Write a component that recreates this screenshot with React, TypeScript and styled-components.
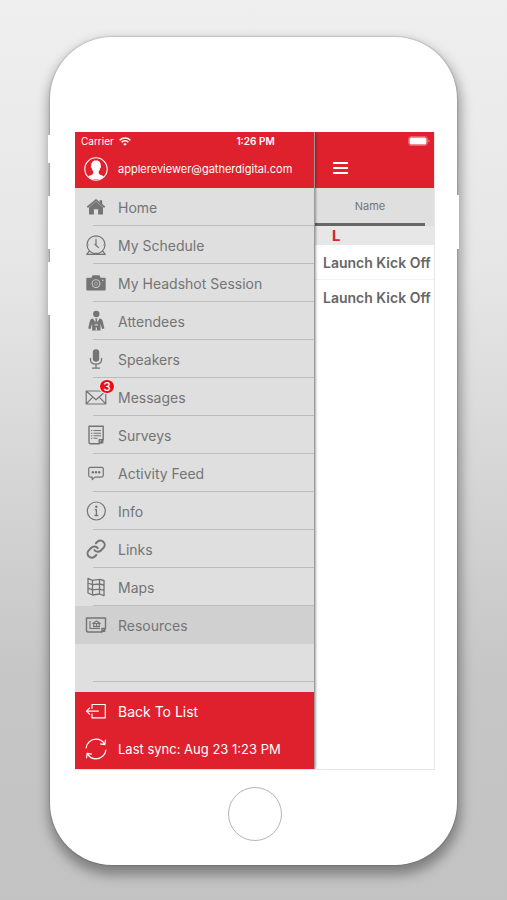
import React from "react";
import styled, { createGlobalStyle, css } from "styled-components";

const red = "#df202d";
const ink = "#747474";

const GlobalStyle = createGlobalStyle`
  *, *::before, *::after { box-sizing: border-box; }
  body { margin: 0; background: #c4c4c4; }
  button { font: inherit; color: inherit; background: none; border: 0; padding: 0; cursor: pointer; }
`;

const Page = styled.main`
  min-height: 100vh;
  padding: 37px 50px 35px;
  display: flex;
  justify-content: center;
  align-items: flex-start;
  background: linear-gradient(#efefef 0%, #e6e6e6 30%, #c6c6c6 75%, #c3c3c3 100%);
  font-family: Inter, Roboto, "Liberation Sans", sans-serif;
  color: ${ink};
`;

const Phone = styled.div`
  position: relative;
  flex: 1;
  max-width: 480px;
  padding: 95px 22px 24px 25px;
  border-radius: 62px;
  background: #fff;
  box-shadow: 0 0 1px 1px rgba(0, 0, 0, 0.12), 1px 7px 12px 3px rgba(0, 0, 0, 0.34);
`;

const SideKey = styled.span<{ $side: "left" | "right"; $top: number; $length: number }>`
  position: absolute;
  ${(p) => p.$side}: -2px;
  top: ${(p) => p.$top}px;
  width: 4px;
  height: ${(p) => p.$length}px;
  background: #fff;
`;

const Screen = styled.div`
  position: relative;
  display: flex;
  border: solid #e6e6e6;
  border-width: 0 1px 1px 0;
  overflow: hidden;
`;

const StatusBar = styled.div`
  position: absolute;
  inset: 0 0 auto 0;
  z-index: 2;
  display: grid;
  grid-template-columns: 1fr auto 1fr;
  align-items: center;
  height: 18px;
  padding: 0 4px 0 6px;
  font-size: 10px;
  color: #fff;
`;

const StatusGroup = styled.div`
  display: flex;
  align-items: center;
  gap: 5px;
`;

const Clock = styled.time`
  font-weight: 600;
`;

const BatterySlot = styled.div`
  display: flex;
  justify-content: flex-end;
`;

const Drawer = styled.aside`
  position: relative;
  z-index: 1;
  flex: 0 0 240px;
  display: flex;
  flex-direction: column;
  background: #dfdfdf;
  border-right: 1px solid rgba(0, 0, 0, 0.3);
  box-shadow: 0 0 3px rgba(0, 0, 0, 0.6);
`;

const Account = styled.header`
  display: flex;
  align-items: center;
  gap: 10px;
  height: 56px;
  padding: 17px 0 0 9px;
  background: ${red};
  color: #fff;
  font-size: 11px;
`;

const Menu = styled.ul`
  margin: 0;
  padding: 0 0 10px;
  list-style: none;
`;

const line = css`
  &::after {
    content: "";
    position: absolute;
    inset: auto 0 0 18px;
    height: 1px;
    background: #bdbdbd;
  }
`;

const MenuItem = styled.li<{ $active?: boolean }>`
  position: relative;
  height: 38px;
  ${(p) => (p.$active ? "background: #d0d0d0;" : line)}
`;

const RowButton = styled.button<{ $size: number }>`
  display: flex;
  align-items: center;
  gap: 11px;
  width: 100%;
  height: 38px;
  padding-left: 10px;
  text-align: left;
  font-size: ${(p) => p.$size}px;
`;

const IconBox = styled.span`
  position: relative;
  flex: none;
  display: flex;
  width: 22px;
  height: 22px;
`;

const Badge = styled.span`
  position: absolute;
  top: -7px;
  right: -8px;
  display: flex;
  align-items: center;
  justify-content: center;
  width: 16px;
  height: 15px;
  border: 1px solid #fff;
  border-radius: 8px;
  background: #f00a12;
  color: #fff;
  font-size: 12px;
  font-weight: 500;
  line-height: 13px;
`;

const DrawerFooter = styled.footer`
  height: 77px;
  background: ${red};
  color: #fff;
`;

const Detail = styled.section`
  flex: 1;
  min-width: 0;
  background: #fff;
`;

const DetailBar = styled.header`
  display: flex;
  align-items: center;
  height: 56px;
  padding: 16px 0 0 18px;
  background: ${red};
  color: #fff;
`;

const MenuToggle = styled.button`
  display: flex;
`;

const Tabs = styled.div`
  height: 38px;
  padding-right: 9px;
  background: #dfdfdf;
`;

const Tab = styled.button`
  width: 100%;
  height: 38px;
  border-bottom: 3px solid #666;
  font-size: 11px;
`;

const Letter = styled.h2`
  margin: 0;
  height: 19px;
  padding-left: 17px;
  background: #e7e7e7;
  color: ${red};
  font: 700 15px/20px Roboto, sans-serif;
`;

const Entries = styled.ul`
  margin: 0;
  padding: 0;
  list-style: none;
`;

const Entry = styled.li`
  height: 35px;
  padding-left: 8px;
  line-height: 35px;
  font-size: 14px;
  font-weight: 600;
  white-space: nowrap;
  overflow: hidden;
  color: #666;
  &:not(:last-child) {
    border-bottom: 1px solid #f3f3f3;
  }
`;

const HomeButton = styled.button`
  display: block;
  width: 54px;
  height: 54px;
  margin: 17px auto 0;
  border: 1px solid #b4b4b4;
  border-radius: 50%;
`;

const Svg = ({ children }: { children: React.ReactNode }) => (
  <svg width="22" height="22" viewBox="0 0 22 22" fill="none" stroke="currentColor" strokeWidth="1.2" strokeLinejoin="round" aria-hidden="true">
    {children}
  </svg>
);

const solid = { fill: "currentColor", stroke: "none" };

const icons = {
  home: (
    <Svg>
      <g {...solid}>
        <path d="M11 3 1.800 10.600l1.100 1.300L11 5.300l8.100 6.600 1.100-1.300-3-2.500V4.200h-2.600V6z" />
        <path d="M11 5.400 4 11.400v7.100h4.900v-5.200h4.200v5.200H18v-7.100z" />
      </g>
    </Svg>
  ),
  schedule: (
    <Svg>
      <circle cx="11" cy="10.800" r="9" />
      <path d="M11 5v6.300l2.800 2.600M11 11.300l-1.500-1M4.500 17l-2.800 3.300h18.600L17.500 17" />
      <path d="M11 2.500v1M11 18v1M2.800 11h1M18.200 11h1" strokeWidth=".8" />
    </Svg>
  ),
  camera: (
    <Svg>
      <path {...solid} d="M2.300 5.800h4.200l1-2.500h7l1 2.500h4.200q1 0 1 1v10.600q0 1-1 1H2.300q-1 0-1-1V6.800q0-1 1-1z" />
      <circle cx="11" cy="11.600" r="3.900" stroke="#c6c6c6" strokeWidth="1.100" />
      <circle cx="11" cy="11.600" r="1.500" stroke="#b4b4b4" strokeWidth=".8" />
      <circle cx="17.800" cy="8.200" r=".7" fill="#dfdfdf" stroke="none" />
    </Svg>
  ),
  attendees: (
    <Svg>
      <circle cx="11.300" cy="4" r="3.200" {...solid} />
      <path {...solid} d="M8 8.500 11.300 14l3.300-5.500c2.200.2 2.800 1.200 3.300 3.300l1.500 6.700-2.300.5-1.600-5.500v6.900H7.100v-6.900L5.500 19l-2.300-.5 1.500-6.700C5.200 9.700 5.800 8.700 8 8.500z" />
      <path {...solid} d="M10 8.500h2.600l-.7 1.300.6 2.700-1.200 1.300-1.200-1.300.6-2.700z" />
      <path d="M9.500 15h3.600M11.300 17.500v3" stroke="#dfdfdf" strokeWidth="1.200" />
    </Svg>
  ),
  speakers: (
    <Svg>
      <rect x="7.800" y="1.200" width="6.400" height="12.600" rx="3.200" {...solid} />
      <path d="M5.500 10v1.800q0 4.400 5.500 4.400t5.500-4.400V10M11 16v3.800M7 20.200h8" strokeWidth="1.300" />
    </Svg>
  ),
  messages: (
    <Svg>
      <path d="M1.200 5h19.600v13H1.200zM1.500 5.300 11 13.800l9.500-8.500M1.500 17.700l6.200-6.600M20.500 17.700l-6.200-6.600" />
    </Svg>
  ),
  surveys: (
    <Svg>
      <path d="M4 2.300h14.200v13.500l-4 4H5.500q-1.500 0-1.500-1.500zM14.200 19.500v-3.700h4" strokeWidth="1.400" />
      <path d="M18.400 15.800v3.700h-3.900z" {...solid} />
      <path d="M8.500 6.500H16M8.500 9.200H16M8.500 11.800H16M8.500 14.300h4M6 6.500h1.300M6 9.200h1.300M6 11.800h1.300M6 14.300h1.300" strokeWidth="1.100" />
    </Svg>
  ),
  feed: (
    <Svg>
      <path d="M5.500 5.300h11q1.800 0 1.800 1.800v6.200q0 1.800-1.800 1.800H9.800l-2.600 2.500v-2.500H5.500q-1.800 0-1.800-1.800V7.100q0-1.800 1.800-1.800z" />
      <g {...solid}>
        <circle cx="7.800" cy="10.200" r="1.200" />
        <circle cx="11" cy="10.200" r="1.200" />
        <circle cx="14.200" cy="10.200" r="1.200" />
      </g>
    </Svg>
  ),
  info: (
    <Svg>
      <circle cx="11.300" cy="11" r="9" />
      <circle cx="11.300" cy="6.800" r="1.200" {...solid} />
      <path d="M9.700 9.600h1.700v5.900M9.500 15.500h3.800" strokeWidth="1.300" />
    </Svg>
  ),
  links: (
    <Svg>
      <g transform="translate(.8 .8) scale(.86)" strokeWidth="2.300" strokeLinecap="round">
        <path d="M10 13a5 5 0 0 0 7.540.540l3-3a5 5 0 0 0-7.070-7.070l-1.720 1.710" />
        <path d="M14 11a5 5 0 0 0-7.540-.540l-3 3a5 5 0 0 0 7.070 7.070l1.710-1.710" />
      </g>
    </Svg>
  ),
  maps: (
    <Svg>
      <path d="M3 2.300 7.500 4.300 14.500 3.300 19 4.500v15.200L14.500 18l-7 1L3 17zM7.500 4.300V19M14.500 3.300V18M3 7l4.500 1.600 7-.6L19 9M3 12.200l4.500 1.600 7-.6 4.500 1.100" strokeWidth="1.300" />
    </Svg>
  ),
  resources: (
    <Svg>
      <path d="M1.500 4h19v10.500L17 18H3q-1.500 0-1.500-1.500zM17 18v-3.500h3.500" strokeWidth="1.400" />
      <path d="M20.300 14.500v3.400h-3.500z" {...solid} />
      <path d="M5 7v7.500h10M7.800 9.500 11.500 7l3.700 2.500zM8.800 10v3.300M11.500 10v3.300M14.200 10v3.300M8 12.600h7" strokeWidth="1.100" />
    </Svg>
  ),
  back: (
    <Svg>
      <path d="M7 8.800V4.500h13.300v13.300H7v-4.300M1.500 11.200h12.300M5 7.700l-3.500 3.500L5 14.700" />
    </Svg>
  ),
  sync: (
    <Svg>
      <path d="M1 10.200C1.500 5 6 1.200 11 1.200c3.700 0 7 2 8.700 5.200M21 11.800c-.5 5.200-5 9-10 9-3.700 0-7-2-8.700-5.200M20.500 1.800l-.6 4.900-4.800-.8M1.500 20.200l.6-4.900 4.800.8" />
    </Svg>
  ),
};

const menu: { label: string; icon: keyof typeof icons; badge?: number; active?: boolean }[] = [
  { label: "Home", icon: "home" },
  { label: "My Schedule", icon: "schedule" },
  { label: "My Headshot Session", icon: "camera" },
  { label: "Attendees", icon: "attendees" },
  { label: "Speakers", icon: "speakers" },
  { label: "Messages", icon: "messages", badge: 3 },
  { label: "Surveys", icon: "surveys" },
  { label: "Activity Feed", icon: "feed" },
  { label: "Info", icon: "info" },
  { label: "Links", icon: "links" },
  { label: "Maps", icon: "maps" },
  { label: "Resources", icon: "resources", active: true },
];

const Avatar = () => (
  <svg width="24" height="24" viewBox="0 0 24 24" aria-hidden="true">
    <circle cx="12" cy="12" r="11.200" fill="none" stroke="#fff" strokeWidth="1.100" />
    <path fill="#fff" d="M12 3.500c3.200 0 4.900 2 4.700 5 .8.300.4 2.500-.5 2.800-.3 1.600-.9 2.500-1.500 3.200v1.800c.6 1.600 3.400 1.700 5 3.200A10 10 0 0 1 12 22.200a10 10 0 0 1-7.700-2.700c1.600-1.500 4.400-1.600 5-3.200v-1.800c-.6-.7-1.200-1.600-1.500-3.200-.9-.3-1.300-2.500-.5-2.800-.2-3 1.500-5 4.700-5z" />
  </svg>
);

const Wifi = () => (
  <svg width="12" height="9" viewBox="0 0 12 9" fill="none" stroke="#fff" strokeWidth="1.500" aria-hidden="true">
    <path d="M.6 3.200C3.600.2 8.400.2 11.400 3.200M2.600 5.200c1.900-1.900 4.900-1.900 6.800 0" />
    <path d="M6 8.800 4.200 6.900q1.800-1.500 3.600 0z" fill="#fff" stroke="none" />
  </svg>
);

const Battery = () => (
  <svg width="22" height="10" viewBox="0 0 22 10" aria-hidden="true">
    <rect x=".5" y=".5" width="19" height="9" rx="2.500" fill="none" stroke="#ea5f69" />
    <rect x="1.500" y="1.500" width="17" height="7" rx="1.500" fill="#fff" />
    <path d="M20.500 3.500q1 .4 1 1.500t-1 1.500z" fill="#f08c93" />
  </svg>
);

export default function App() {
  return (
    <Page>
      <GlobalStyle />
      <Phone>
        <SideKey $side="left" $top={98} $length={28} />
        <SideKey $side="left" $top={159} $length={53} />
        <SideKey $side="left" $top={225} $length={53} />
        <SideKey $side="right" $top={158} $length={54} />
        <Screen>
          <StatusBar>
            <StatusGroup>
              Carrier <Wifi />
            </StatusGroup>
            <Clock>1:26 PM</Clock>
            <BatterySlot>
              <Battery />
            </BatterySlot>
          </StatusBar>
          <Drawer>
            <Account>
              <Avatar />
              <span>applereviewer@gatherdigital.com</span>
            </Account>
            <nav>
              <Menu>
                {menu.map((item) => (
                  <MenuItem key={item.label} $active={item.active}>
                    <RowButton $size={14} aria-current={item.active ? "page" : undefined}>
                      <IconBox>
                        {icons[item.icon]}
                        {item.badge && <Badge>{item.badge}</Badge>}
                      </IconBox>
                      {item.label}
                    </RowButton>
                  </MenuItem>
                ))}
                <MenuItem aria-hidden="true" />
              </Menu>
            </nav>
            <DrawerFooter>
              <RowButton $size={14}>
                <IconBox>{icons.back}</IconBox>
                Back To List
              </RowButton>
              <RowButton $size={13}>
                <IconBox>{icons.sync}</IconBox>
                <span>Last sync: Aug 23 1:23 PM</span>
              </RowButton>
            </DrawerFooter>
          </Drawer>
          <Detail>
            <DetailBar>
              <MenuToggle aria-label="Toggle menu">
                <svg width="16" height="12" viewBox="0 0 16 12" stroke="#fff" strokeWidth="2" aria-hidden="true">
                  <path d="M0 1h15M0 6h15M0 11h15" />
                </svg>
              </MenuToggle>
            </DetailBar>
            <Tabs>
              <Tab>Name</Tab>
            </Tabs>
            <Letter>L</Letter>
            <Entries>
              <Entry>Launch Kick Off</Entry>
              <Entry>Launch Kick Off</Entry>
            </Entries>
          </Detail>
        </Screen>
        <HomeButton aria-label="Home button" />
      </Phone>
    </Page>
  );
}
